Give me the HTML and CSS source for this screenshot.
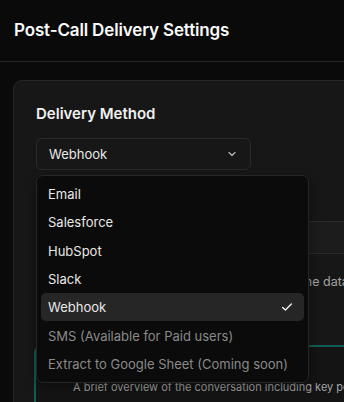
FILE: index.html
```html
<!DOCTYPE html>
<html>
<head>
<meta charset="utf-8">
<link rel="stylesheet" href="styles.css">
</head>
<body>
<header class="topbar">
  <h1 class="title">Post-Call Delivery Settings</h1>
</header>
<main class="main">
  <section class="card">
    <h2 class="section-title">Delivery Method</h2>
    <div class="select-wrap">
      <button class="select">
        <span>Webhook</span>
        <svg class="chev" width="12" height="12" viewBox="0 0 16 16" fill="none" stroke="currentColor" stroke-width="1.5" stroke-linecap="round" stroke-linejoin="round"><path d="M4 6l4 4 4-4"/></svg>
      </button>
    </div>
    <div class="spacer"></div>
    <div class="tabs">
      <span class="tab">Summary</span>
      <span class="tab">Transcript</span>
    </div>
    <p class="desc">Choose which parts of the summary go into the data sent to your webhook.</p>
    <div class="option selected">
      <div class="opt-head">
        <span class="check"></span>
        <span class="opt-title">Call Summary</span>
      </div>
      <p class="opt-desc">A brief overview of the conversation including key points discussed and next steps.</p>
    </div>

    <div class="menu" role="listbox">
      <div class="item">Email</div>
      <div class="item">Salesforce</div>
      <div class="item">HubSpot</div>
      <div class="item">Slack</div>
      <div class="item active">Webhook
        <svg class="tick" width="14" height="14" viewBox="0 0 16 16" fill="none" stroke="currentColor" stroke-width="1.6" stroke-linecap="round" stroke-linejoin="round"><path d="M3 8.5l3.2 3L13 4.5"/></svg>
      </div>
      <div class="item disabled">SMS (Available for Paid users)</div>
      <div class="item disabled">Extract to Google Sheet (Coming soon)</div>
    </div>
  </section>
</main>
</body>
</html>
```
FILE: styles.css
```css
* { box-sizing: border-box; }
html, body { margin: 0; padding: 0; }
body {
  background: #0a0a0a;
  font-family: Inter, "Noto Sans", sans-serif;
  color: #f5f5f5;
  overflow: hidden;
  width: 344px;
  height: 402px;
}
.topbar {
  height: 62px;
  border-bottom: 1px solid #262626;
  display: flex;
  align-items: center;
  padding-left: 14px;
}
.title {
  margin: 0;
  font-size: 17px;
  font-weight: 600;
  letter-spacing: -0.15px;
  color: #fafafa;
  padding-bottom: 1px;
}
.main {
  padding: 18px 0 0 13px;
}
.card {
  position: relative;
  width: 700px;
  height: 600px;
  background: #171717;
  border: 1px solid #262626;
  border-radius: 9px;
  padding: 23px 22px;
}
.section-title {
  margin: 0 0 14px;
  font-size: 15px;
  line-height: 20px;
  font-weight: 600;
  color: #f0f0f0;
}
.select {
  width: 215px;
  height: 32px;
  background: #171717;
  border: 1px solid #2a2a2a;
  border-radius: 6px;
  display: flex;
  align-items: center;
  justify-content: space-between;
  padding: 0 12px 0 12px;
  font-family: inherit;
  font-size: 13px;
  color: #e8e8e8;
}
.chev { color: #bdbdbd; }
.spacer { height: 51px; }
.tabs {
  height: 33px;
  background: #1c1c1c;
  border-top: 1px solid #2a2a2a;
  border-bottom: 1px solid #2a2a2a;
  display: flex;
  align-items: center;
  gap: 16px;
  padding-left: 14px;
  font-size: 13px;
  color: #a3a3a3;
}
.desc {
  margin: 19px 0 0;
  font-size: 12.5px;
  line-height: 18px;
  color: #a3a3a3;
  white-space: nowrap;
  padding-left: 3px;
}
.option {
  margin: 54px 0 0 -2px;
  width: 640px;
  border-radius: 8px;
  padding: 10px 14px 20px 14px;
  background: #141414;
}
.option.selected {
  border: 2px solid #115e59;
}
.opt-head { display: flex; align-items: center; gap: 10px; height: 20px; }
.check {
  width: 14px; height: 14px; border-radius: 3px; background: #0f766e;
}
.opt-title { font-size: 13px; font-weight: 600; color: #f0f0f0; margin-left: 12px; }
.opt-desc {
  margin: 1px 0 0 23px;
  font-size: 11px;
  line-height: 18px;
  color: #a3a3a3;
  white-space: nowrap;
}
.menu {
  position: absolute;
  left: 22px;
  top: 94px;
  width: 273px;
  height: 208px;
  background: #0b0b0b;
  border: 1px solid #262626;
  border-radius: 7px;
  padding: 4px;
  box-shadow: 0 4px 12px rgba(0,0,0,0.4);
}
.item {
  height: 28.3px;
  display: flex;
  align-items: center;
  justify-content: space-between;
  padding: 0 10px 0 7px;
  font-size: 13px;
  color: #e8e8e8;
  border-radius: 5px;
}
.item.active { background: #262626; }
.item.disabled { color: #8a8a8a; }
.tick { color: #f0f0f0; }
```
